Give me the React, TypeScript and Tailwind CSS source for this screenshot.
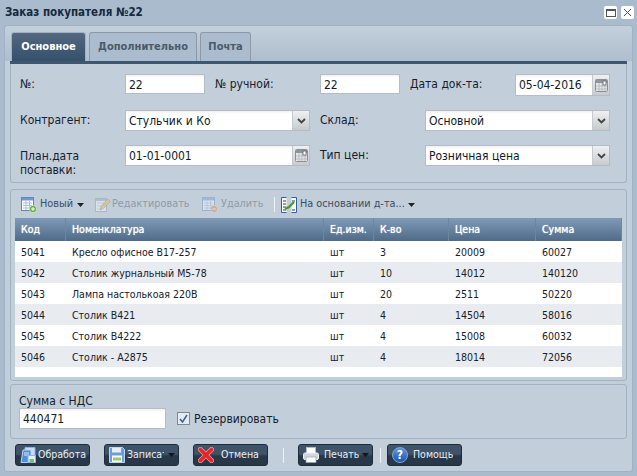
import { ReactNode } from "react";

const rows = [
  ["5041", "Кресло офисное В17-257", "шт", "3", "20009", "60027"],
  ["5042", "Столик журнальный М5-78", "шт", "10", "14012", "140120"],
  ["5043", "Лампа настолькоая 220В", "шт", "20", "2511", "50220"],
  ["5044", "Столик В421", "шт", "4", "14504", "58016"],
  ["5045", "Столик В4222", "шт", "4", "15008", "60032"],
  ["5046", "Столик - А2875", "шт", "4", "18014", "72056"],
];

const cols = ["w-[51px]", "w-[258px]", "w-[50px]", "w-[75px]", "w-[87px]", "flex-1"];

function CalendarIcon() {
  return (
    <svg width="13" height="13" viewBox="0 0 13 13">
      <rect x="0.5" y="0.5" width="12" height="12" rx="1" fill="#e6e8ea" stroke="#8a8f94" />
      <rect x="1" y="1" width="11" height="3" fill="#8f959b" />
      <path d="M1 7h11M1 10h11M4 4v8M7 4v8M10 4v8" stroke="#b8bcc0" />
      <rect x="8" y="2" width="3" height="4" fill="#fff" stroke="#555" strokeWidth="0.7" />
    </svg>
  );
}

function Input({ value, size = "h-[21px]", className, trigger }: { value: string; size?: string; className: string; trigger?: "date" | "select" }) {
  return (
    <div className={"flex shrink-0 border border-[#b5bcc8] bg-gradient-to-b from-[#f0f0f0] to-white to-[15%] " + size + " " + className}>
      <span className="flex-1 overflow-hidden pl-[3px] leading-[20px] text-[#0d1a2a]">{value}</span>
      {trigger && (
        <span className="flex w-[17px] items-center justify-center border-l border-[#c5cad0] bg-gradient-to-b from-[#eef0f2] to-[#c8cbce]">
          {trigger === "date" ? (
            <CalendarIcon />
          ) : (
            <svg width="9" height="6" viewBox="0 0 9 6">
              <path d="M1 1l3.5 3.5L8 1" fill="none" stroke="#444" strokeWidth="1.8" />
            </svg>
          )}
        </span>
      )}
    </div>
  );
}

function Caret({ color = "#222" }: { color?: string }) {
  return (
    <svg width="7" height="4" viewBox="0 0 7 4" className="shrink-0">
      <path d="M0 0h7L3.5 4z" fill={color} />
    </svg>
  );
}

function Sheet({ badge, faded }: { badge: string; faded?: boolean }) {
  return (
    <svg width="16" height="16" viewBox="0 0 16 16" className={"shrink-0 " + (faded ? "opacity-40" : "")}>
      <rect x="0.5" y="0.5" width="12" height="13" fill="#fff" stroke="#5f88b5" />
      <rect x="1" y="1" width="11" height="2.5" fill="#6e9bd0" />
      <path d="M2 6h9M2 8.5h9M2 11h9M5 4v9M8.5 4v9" stroke="#a8c0dc" />
      <circle cx="12" cy="12" r="3.5" fill={badge} stroke="#fff" strokeWidth="0.5" />
      <path d="M10 12h4" stroke="#fff" />
      {badge === "#5cae3a" && <path d="M12 10v4" stroke="#fff" />}
    </svg>
  );
}

function EditIcon() {
  return (
    <svg width="16" height="16" viewBox="0 0 16 16" className="shrink-0 opacity-40">
      <rect x="0.5" y="1.5" width="11" height="13" fill="#fff" stroke="#7a98b8" />
      <rect x="1" y="2" width="10" height="2" fill="#8fb09a" />
      <path d="M2 6h8M2 9h6M2 12h5" stroke="#a8c0dc" />
      <path d="M5 13l1-4 7-7 2.5 2.5-7 7z" fill="#e8b04a" stroke="#a87820" strokeWidth="0.6" />
    </svg>
  );
}

function BasedIcon() {
  return (
    <svg width="16" height="16" viewBox="0 0 16 16" className="shrink-0">
      <path d="M5.5 0.5H0.5v15h5" fill="#fff" stroke="#2f5fa8" />
      <path d="M10.5 0.5h5v15h-5" fill="#fff" stroke="#2f5fa8" />
      <path d="M2 4h3M2 7h3M2 10h3M2 13h3M11 4h3M11 13h3" stroke="#2a3a50" />
      <path d="M4 12l4-2 5-5" fill="none" stroke="#4a9a2a" strokeWidth="2.4" />
    </svg>
  );
}

function SaveIcon() {
  return (
    <svg width="16" height="16" viewBox="0 0 16 16">
      <path d="M0.5 0.5h13l2 2v13H0.5z" fill="#6d9ddc" stroke="#c0d4ee" />
      <rect x="3" y="1" width="9" height="4.5" fill="#e8eef5" />
      <rect x="3" y="8.5" width="10" height="6.5" fill="#fff" />
      <rect x="4" y="10.5" width="8" height="3" fill="#8fd06a" />
    </svg>
  );
}

function ProcessIcon() {
  return (
    <svg width="16" height="16" viewBox="0 0 16 16">
      <path d="M5 0.5h10v9H5z" fill="#c9dcf2" stroke="#8ab4e4" />
      <path d="M3 3h8v12.5H1z" fill="#4f8fdc" stroke="#bcd3ee" />
      <path d="M4 6h5M4 8h5" stroke="#dbe8f7" />
      <rect x="8" y="8.5" width="7.5" height="7" fill="#e6eef7" stroke="#89b5e0" />
      <rect x="9.5" y="12" width="4.5" height="3" fill="#7cc45a" />
    </svg>
  );
}

function CancelIcon() {
  return (
    <svg width="16" height="16" viewBox="0 0 16 16">
      <path d="M2.5 2.5l11 11M13.5 2.5l-11 11" stroke="#f4a0a0" strokeWidth="5" strokeLinecap="round" />
      <path d="M2.5 2.5l11 11M13.5 2.5l-11 11" stroke="#e4272b" strokeWidth="3.8" strokeLinecap="round" />
    </svg>
  );
}

function PrintIcon() {
  return (
    <svg width="16" height="16" viewBox="0 0 16 16">
      <rect x="3.5" y="0.5" width="9" height="6" fill="#fff" stroke="#b4bcc6" />
      <rect x="0.5" y="6" width="15" height="6.5" rx="1.5" fill="#cfd6dd" stroke="#eef2f6" />
      <rect x="3" y="10" width="10" height="5.5" fill="#fff" stroke="#9aa4b0" strokeWidth="0.7" />
    </svg>
  );
}

function HelpIcon() {
  return (
    <div className="flex h-[16px] w-[16px] items-center justify-center rounded-full border border-[#7fa6dc] bg-gradient-to-b from-[#5f96e4] to-[#1d55ad] text-[12px] leading-none font-bold text-white">
      ?
    </div>
  );
}

function DarkButton({ icon, label, caret, className, labelClass }: { icon: ReactNode; label: string; caret?: boolean; className?: string; labelClass?: string }) {
  return (
    <div className={"flex h-[22px] w-[75px] shrink-0 items-center rounded-[3px] border border-[#1e2c3a] bg-gradient-to-b from-[#3f5369] from-45% to-[#293848] to-55% pl-[2px] text-[10.5px] text-[#e8eef5] " + (className ?? "")}>
      <span className="flex w-[20px] shrink-0 justify-center">{icon}</span>
      <span className={"overflow-hidden whitespace-nowrap " + (labelClass ?? "")}>{label}</span>
      {caret && <span className="ml-auto pr-[3px] pl-[1px]"><Caret color="#10161c" /></span>}
    </div>
  );
}

export default function App() {
  return (
    <div className="flex h-[476px] w-[637px] flex-col overflow-hidden bg-[#a9bbcc] font-['DejaVu_Sans',sans-serif] text-[10.5px] text-[#15202c] [font-stretch:condensed]">
      {/* Title bar */}
      <div className="flex h-[25px] shrink-0 items-center justify-between pr-[3px] pl-[5px]">
        <span className="text-[11.5px] font-bold text-[#15293f]">Заказ покупателя №22</span>
        <div className="flex gap-[4px]">
          <div className="flex h-[13px] w-[13px] items-center justify-center rounded-[2px] bg-white">
            <span className="h-[8px] w-[10px] border border-t-2 border-[#4a5560]" />
          </div>
          <div className="flex h-[13px] w-[13px] items-center justify-center rounded-[2px] bg-white">
            <svg width="9" height="9" viewBox="0 0 9 9">
              <path d="M1 1l7 7M8 1L1 8" stroke="#4a5560" />
            </svg>
          </div>
        </div>
      </div>

      <div className="mx-[4px] mb-[4px] flex flex-1 flex-col rounded-[3px] border border-[#9fb2c6] bg-[linear-gradient(#c3d0dc,#aebecd_35px,#c2cfdb_35px)] px-[5px] pt-[6px]">
        {/* Tabs */}
        <div className="flex h-[32px] shrink-0 gap-[3px] border-b-[3px] border-[#3f566f] pl-[1px] text-[11px]">
          <div className="flex w-[75px] items-center justify-center rounded-t-[3px] border border-b-0 border-[#9fb2c6] bg-gradient-to-b from-[#54687f] to-[#35506c] font-bold text-white">
            Основное
          </div>
          <div className="flex w-[108px] items-center justify-center rounded-t-[3px] border border-b-0 border-[#8d99a6] bg-[#aabccd] font-bold text-[#4b5a69]">
            Дополнительно
          </div>
          <div className="flex w-[51px] items-center justify-center rounded-t-[3px] border border-b-0 border-[#8d99a6] bg-[#aabccd] font-bold text-[#4b5a69]">
            Почта
          </div>
        </div>

        {/* Form */}
        <div className="flex h-[119px] shrink-0 flex-col rounded-b-[3px] border border-t-0 border-[#9fb2c6] pt-[10px] pl-[9px] text-[12px]">
          <div className="flex h-[21px] items-start leading-[21px]">
            <span className="w-[105px]">№:</span>
            <Input value="22" size="h-[20px]" className="w-[80px]" />
            <span className="w-[115px] pl-[10px]">№ ручной:</span>
            <Input value="22" size="h-[20px]" className="w-[80px]" />
            <span className="w-[115px] pl-[10px]">Дата док-та:</span>
            <Input value="05-04-2016" size="h-[22px]" className="w-[95px]" trigger="date" />
          </div>
          <div className="mt-[15px] flex h-[21px] items-start leading-[21px]">
            <span className="w-[105px]">Контрагент:</span>
            <Input value="Стульчик и Ко" className="w-[185px]" trigger="select" />
            <span className="w-[115px] pl-[10px]">Склад:</span>
            <Input value="Основной" className="w-[185px]" trigger="select" />
          </div>
          <div className="mt-[14px] flex h-[21px] items-start leading-[21px]">
            <span className="w-[105px] pr-[30px] pt-[4px] leading-[14px]">План.дата поставки:</span>
            <Input value="01-01-0001" className="w-[185px]" trigger="date" />
            <span className="w-[115px] pl-[10px]">Тип цен:</span>
            <Input value="Розничная цена" className="w-[185px]" trigger="select" />
          </div>
        </div>

        {/* Goods grid */}
        <div className="mt-[6px] flex h-[192px] shrink-0 flex-col rounded-[3px] border border-[#9fb2c6] px-[4px] pb-[3px]">
          <div className="flex h-[28px] shrink-0 items-center pt-[1px] pl-[6px] text-[10.8px]">
            <Sheet badge="#5cae3a" />
            <span className="ml-[3px] w-[37px] text-[#3b4c5e]">Новый</span>
            <Caret />
            <span className="w-[11px]" />
            <EditIcon />
            <span className="ml-[1px] w-[90px] text-[#8f9aa6]">Редактировать</span>
            <Sheet badge="#e0763a" faded />
            <span className="ml-[3px] w-[53px] text-[#8f9aa6]">Удалить</span>
            <span className="h-[15px] w-px bg-[#eef4fa]" />
            <span className="w-[6px]" />
            <BasedIcon />
            <span className="ml-[3px] w-[108px] text-[#3b4c5e]">На основании д-та...</span>
            <Caret />
          </div>
          <div className="flex h-[23px] shrink-0 bg-gradient-to-b from-[#7f9bb8] to-[#4f6b87] text-white [text-shadow:0_0_1px_#fff]">
            {["Код", "Номенклатура", "Ед.изм.", "К-во", "Цена", "Сумма"].map((h, i) => (
              <div key={h} className={"border-r border-[#6d87a2] pl-[6px] leading-[22px] " + cols[i]}>
                {h}
              </div>
            ))}
          </div>
          <div className="flex-1 bg-white">
            {rows.map((r, i) => (
              <div key={r[0]} className={"flex h-[21px] items-center pt-[2px] " + (i % 2 ? "bg-[#e8ecf1]" : "bg-white")}>
                {r.map((c, j) => (
                  <div key={j} className={"pl-[6px] " + cols[j]}>
                    {c}
                  </div>
                ))}
              </div>
            ))}
          </div>
        </div>

        {/* Totals */}
        <div className="mt-[3px] flex h-[55px] shrink-0 items-end rounded-[3px] border border-[#9fb2c6] pb-[9px] pl-[8px] text-[12px]">
          <div className="w-[147px]">
            <div className="h-[18px] leading-[22px]">Сумма с НДС</div>
            <Input value="440471" className="w-[147px]" />
          </div>
          <div className="ml-[11px] flex h-[21px] items-center gap-[4px]">
            <span className="flex h-[13px] w-[13px] items-center justify-center border border-[#7e8894] bg-[#e6ebf1]">
              <svg width="9" height="9" viewBox="0 0 9 9">
                <path d="M1 5l2.5 3L8 1" fill="none" stroke="#34609a" strokeWidth="1.5" />
              </svg>
            </span>
            Резервировать
          </div>
        </div>

        {/* Actions */}
        <div className="mt-[5px] flex items-center pl-[5px]">
          <DarkButton icon={<ProcessIcon />} label="Обработа" />
          <DarkButton icon={<SaveIcon />} label="Записать" caret className="ml-[14px]" labelClass="w-[37px]" />
          <DarkButton icon={<CancelIcon />} label="Отмена" className="ml-[14px]" labelClass="pl-[5px]" />
          <span className="ml-[15px] mr-[14px] h-[15px] w-px bg-[#eef4fa]" />
          <DarkButton icon={<PrintIcon />} label="Печать" caret labelClass="pl-[3px]" />
          <span className="ml-[7px] mr-[6px] h-[15px] w-px bg-[#eef4fa]" />
          <DarkButton icon={<HelpIcon />} label="Помощь" labelClass="pl-[3px]" />
        </div>
      </div>
    </div>
  );
}
